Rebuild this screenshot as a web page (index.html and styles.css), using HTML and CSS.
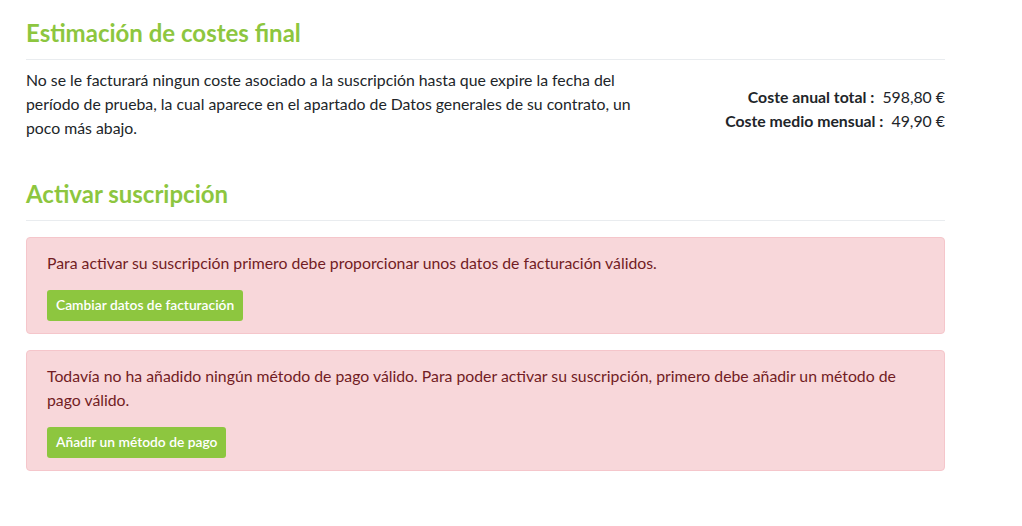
FILE: index.html
```html
<!DOCTYPE html>
<html lang="es">
<head>
<meta charset="utf-8">
<title>Suscripción</title>
<link rel="stylesheet" href="styles.css">
</head>
<body>
<div class="page">
  <section class="section">
    <h2 class="section-title">Estimación de costes final</h2>
    <div class="estimate">
      <p class="estimate-text">No se le facturará ningun coste asociado a la suscripción hasta que expire la fecha del período de prueba, la cual aparece en el apartado de Datos generales de su contrato, un poco más abajo.</p>
      <div class="totals">
        <div class="total-row"><span class="total-label">Coste anual total :</span>&nbsp; <span class="total-value">598,80 €</span></div>
        <div class="total-row"><span class="total-label">Coste medio mensual :</span>&nbsp; <span class="total-value">49,90 €</span></div>
      </div>
    </div>
  </section>
  <section class="section">
    <h2 class="section-title">Activar suscripción</h2>
    <div class="alert">
      <p class="alert-text">Para activar su suscripción primero debe proporcionar unos datos de facturación válidos.</p>
      <button class="btn">Cambiar datos de facturación</button>
    </div>
    <div class="alert">
      <p class="alert-text">Todavía no ha añadido ningún método de pago válido. Para poder activar su suscripción, primero debe añadir un método de pago válido.</p>
      <button class="btn">Añadir un método de pago</button>
    </div>
  </section>
</div>
</body>
</html>
```
FILE: styles.css
```css
* { box-sizing: border-box; }
body {
  margin: 0;
  font-family: Lato, "Open Sans", sans-serif;
  font-size: 15.8px;
  line-height: 24px;
  color: #212529;
  background: #fff;
}
.page {
  width: 919px;
  margin-left: 26px;
  padding-top: 17px;
}
.section-title {
  margin: 0;
  font-size: 24px;
  line-height: 32px;
  font-weight: 700;
  color: #8dc63f;
  padding-bottom: 10px;
  border-bottom: 1px solid #e9ecef;
  margin-bottom: 8px;
}
.section + .section { margin-top: 38px; }
.estimate {
  display: flex;
  justify-content: space-between;
}
.estimate-text {
  margin: 0;
  width: 630px;
}
.totals {
  padding-top: 17px;
  text-align: right;
}
.total-label { font-weight: 700; }
.alert {
  background: #f8d7da;
  border: 1px solid #f5c6cb;
  border-radius: 4px;
  color: #721c24;
  padding: 13px 20px 12px;
  margin-top: 16px;
}
.alert + .alert { margin-top: 16px; }
.alert-text { margin: 0 0 15px; }
.btn {
  display: block;
  height: 31px;
  font-family: inherit;
  font-size: 13.8px;
  font-weight: 600;
  line-height: 20px;
  color: #fff;
  background: #8dc63f;
  border: 0;
  border-radius: 3px;
  padding: 5px 9px 6px;
}
```
